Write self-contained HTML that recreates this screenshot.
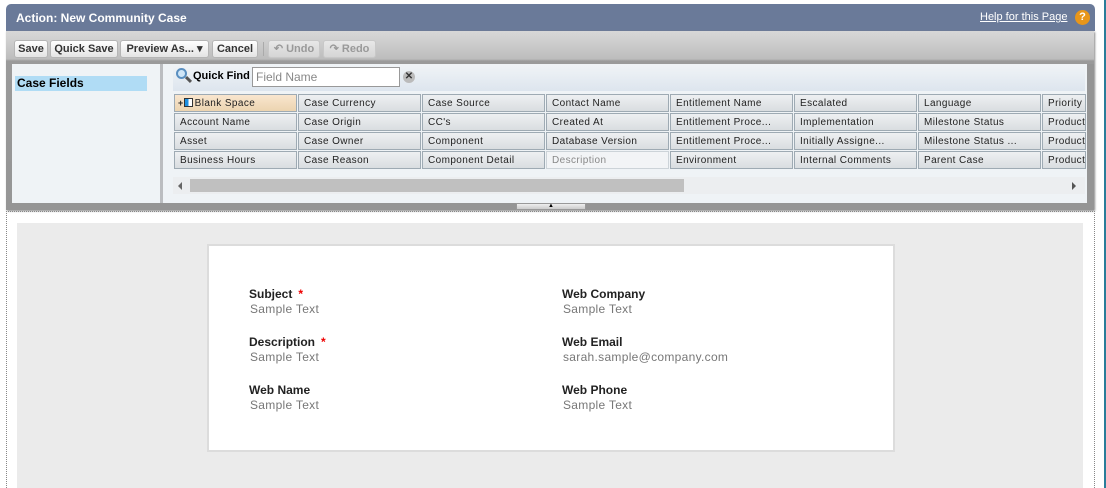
<!DOCTYPE html>
<html><head><meta charset="utf-8"><style>
*{margin:0;padding:0;box-sizing:border-box}
html,body{width:1106px;height:488px;overflow:hidden}
body{background:#fff;position:relative;font-family:"Liberation Sans",Arial,sans-serif;font-size:11px}
.a{position:absolute}
.hdr{left:6px;top:4px;width:1089px;height:27px;background:#6a7a99;border-radius:5px 5px 0 0;color:#fff}
.panel{left:6px;top:31px;width:1088px;height:179px;background:linear-gradient(#d8d8d8,#bdbdbd 28px,#9a9a9a 30px,#959595);box-shadow:1px 1px 2px #888}
.btn{top:40px;height:18px;background:linear-gradient(#fff,#e4e4e4);border:1px solid #b5b5b5;border-radius:3px;font-weight:bold;font-size:11px;color:#333;line-height:16px;padding:0 3px;text-align:center}
.dis{color:#999;background:linear-gradient(#e8e8e8,#d5d5d5);border-color:#c8c8c8}
.cell{height:18px;width:123px;border:1px solid #9eaab3;background:linear-gradient(#eef0f2,#d9dde0);font-size:10px;color:#222;line-height:17px;padding-left:5px;white-space:nowrap;overflow:hidden;letter-spacing:.4px}
.lbl{font-weight:bold;font-size:12px;color:#222}
.val{font-size:12px;color:#777;letter-spacing:.3px}
.star{color:#e00;font-weight:bold;margin-left:6px}
</style></head><body>
<div class="a hdr"><span class="a" style="left:10px;top:7px;font-weight:bold;font-size:12px">Action: New Community Case</span>
<span class="a" style="left:974px;top:7px;font-size:11px;text-decoration:underline">Help for this Page</span>
<span class="a" style="left:1069px;top:6px;width:15px;height:15px;border-radius:50%;background:#e8961a;color:#fff;font-weight:bold;font-size:11px;text-align:center;line-height:15px">?</span></div>
<div class="a panel"></div>
<div class="a btn" style="left:14px;width:34px">Save</div>
<div class="a btn" style="left:50px;width:68px">Quick Save</div>
<div class="a btn" style="left:120px;width:89px">Preview As... ▾</div>
<div class="a btn" style="left:212px;width:46px">Cancel</div>
<div class="a" style="left:263px;top:42px;width:1px;height:14px;background:#aaa"></div>
<div class="a btn dis" style="left:268px;width:52px">↶ Undo</div>
<div class="a btn dis" style="left:323px;width:53px">↷ Redo</div>
<div class="a" style="left:12px;top:64px;width:148px;height:139px;background:#eff3f6"></div>
<div class="a" style="left:15px;top:76px;width:132px;height:15px;background:#b0dcf5;font-weight:bold;font-size:12px;line-height:15px;padding-left:2px">Case Fields</div>
<div class="a" style="left:160px;top:64px;width:3px;height:139px;background:#bbbdc0"></div>
<div class="a" style="left:163px;top:64px;width:924px;height:139px;background:#eff3f6"></div>
<div class="a" style="left:173px;top:66px;width:912px;height:25px;background:linear-gradient(#eff3f6,#dde5ee)"></div>
<div class="a" style="left:176px;top:68px;width:11px;height:11px;border:2px solid #5a8fc0;border-radius:50%;background:#cfe6f8"></div>
<div class="a" style="left:185px;top:78px;width:7px;height:3px;background:#555;transform:rotate(45deg)"></div>
<span class="a" style="left:193px;top:70px;font-weight:bold;font-size:11px">Quick Find</span>
<div class="a" style="left:252px;top:67px;width:148px;height:20px;border:1px solid #999;background:#fff;color:#888;font-size:12px;line-height:18px;padding-left:3px">Field Name</div>
<div class="a" style="left:403px;top:71px;width:12px;height:12px;border-radius:50%;background:#bbb;color:#333;font-size:10px;font-weight:bold;text-align:center;line-height:12px">✕</div>
<div id="g"></div>
<div class="a" style="left:173px;top:177px;width:912px;height:17px;background:#eceef0"></div>
<div class="a" style="left:178px;top:182px;width:0;height:0;border:4px solid transparent;border-right:4px solid #666;border-left:0"></div>
<div class="a" style="left:190px;top:179px;width:494px;height:13px;background:#c0c0c0"></div>
<div class="a" style="left:1072px;top:182px;width:0;height:0;border:4px solid transparent;border-left:4px solid #555;border-right:0"></div>
<div class="a" style="left:516px;top:203px;width:70px;height:7px;background:linear-gradient(#eee,#ccc);border:1px solid #999;text-align:center;font-size:6px;line-height:5px">▲</div>
<div class="a" style="left:6px;top:211px;width:1089px;height:277px;border-left:1px dotted #888;border-right:1px dotted #888;border-top:1px dotted #888"></div>
<div class="a" style="left:1104px;top:0;width:2px;height:488px;background:#2a7d9a"></div>
<div class="a" style="left:17px;top:223px;width:1066px;height:265px;background:#ebebeb"></div>
<div class="a" style="left:207px;top:244px;width:688px;height:208px;background:#fff;border:2px solid #dcdcdc"></div>
<div class="a lbl" style="left:249px;top:287px">Subject<span class="star">*</span></div>
<div class="a val" style="left:250px;top:302px">Sample Text</div>
<div class="a lbl" style="left:249px;top:335px">Description<span class="star">*</span></div>
<div class="a val" style="left:250px;top:350px">Sample Text</div>
<div class="a lbl" style="left:249px;top:383px">Web Name</div>
<div class="a val" style="left:250px;top:398px">Sample Text</div>
<div class="a lbl" style="left:562px;top:287px">Web Company</div>
<div class="a val" style="left:563px;top:302px">Sample Text</div>
<div class="a lbl" style="left:562px;top:335px">Web Email</div>
<div class="a val" style="left:563px;top:350px">sarah.sample@company.com</div>
<div class="a lbl" style="left:562px;top:383px">Web Phone</div>
<div class="a val" style="left:563px;top:398px">Sample Text</div>
<div class="a" style="left:1087px;top:64px;width:7px;height:139px;background:#959595"></div>
<script>
var cols=[["Blank Space","Account Name","Asset","Business Hours"],["Case Currency","Case Origin","Case Owner","Case Reason"],["Case Source","CC's","Component","Component Detail"],["Contact Name","Created At","Database Version","Description"],["Entitlement Name","Entitlement Proce...","Entitlement Proce...","Environment"],["Escalated","Implementation","Initially Assigne...","Internal Comments"],["Language","Milestone Status","Milestone Status ...","Parent Case"],["Priority","Product","Product","Product"]];
var h="";
cols.forEach(function(c,i){c.forEach(function(t,j){var x=174+i*124,y=94+j*19;var st="left:"+x+"px;top:"+y+"px;";
if(i==7)st+="width:44px;";
if(i==0&&j==0){st+="background:linear-gradient(#f9e6cf,#ecd4b0);padding-left:3px;";t="<b style='font-size:9px'>+</b><span style='display:inline-block;width:9px;height:9px;border:1px solid #333;background:linear-gradient(90deg,#1e8fe0 50%,#fff 50%);vertical-align:-1px;margin-right:2px'></span>"+t;}
if(i==3&&j==3)st+="background:#f2f4f6;color:#888;border-color:#ccd3d8;";
h+='<div class="a cell" style="'+st+'">'+t+'</div>';});});
document.getElementById("g").innerHTML=h;
</script>
</body></html>
